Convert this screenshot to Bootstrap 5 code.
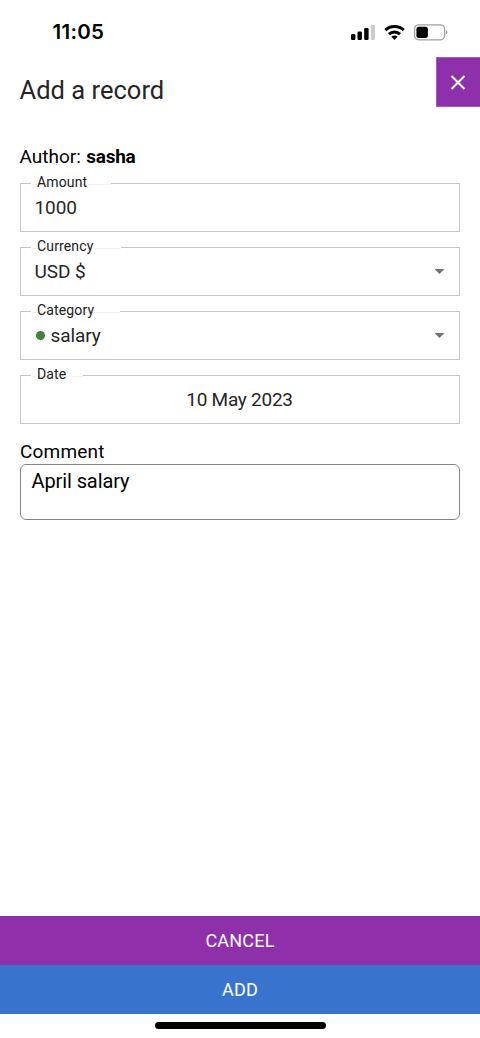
<!DOCTYPE html>
<html lang="en">
<head>
<meta charset="utf-8">
<meta name="viewport" content="width=device-width, initial-scale=1">
<title>Add a record</title>
<link href="https://cdn.jsdelivr.net/npm/bootstrap@5.3.0/dist/css/bootstrap.min.css" rel="stylesheet">
<style>
body{font-family:Roboto,"Liberation Sans",sans-serif;font-size:19px;line-height:24px;color:#000;background:#fff}
.screen{height:1038px}
.status{height:57px;padding:6px 32px 0 52.5px}
.clock{font-family:Inter,sans-serif;font-weight:600;font-size:20.5px;letter-spacing:.3px}
.head{height:50px;padding-left:19.5px}
.title{font-size:25.5px;line-height:30px;color:#262626;padding-top:18px;letter-spacing:.02px}
.close-btn{width:44.5px;height:50px;background:#8e30aa;border:1px solid #a45bbb;border-right:0;border-radius:0}
.record-form{padding:0 20px}
.author{margin:38px 0 14px -.5px;letter-spacing:0}
.author b{margin-left:.8px;letter-spacing:-.3px}
.field{height:49px;border:1px solid #c6c6c6;padding:0 14.5px 0 13.5px;margin-bottom:15px;color:#262626}
.field-label{top:-10px;left:10px;font-size:14px;line-height:16px;padding-left:6px;color:#212121;background:#fff;height:11px;border-bottom:1px solid #f2f2f2;letter-spacing:.15px}
.value{letter-spacing:-.08px}
.date-value{letter-spacing:-.25px}
.caret{width:10px;height:5px;background:#737373;clip-path:polygon(0 0,100% 0,50% 100%)}
.dot{width:9px;height:9px;background:#45803b;margin:0 6px 0 1px}
.comment-label{margin-top:16px;letter-spacing:.2px}
.comment-box{height:56px;border:1px solid #858585;border-radius:6px;padding:4px 10.5px;font-size:20px;letter-spacing:-.1px}
.wide-btn{height:49px;border:0;border-radius:0;color:#fff;font-size:18px;letter-spacing:.2px}
.cancel{background:#8e30aa}
.add{background:#3874cd}
.home{height:24px;padding-top:8px}
.home-bar{width:171px;height:6.5px;border-radius:4px;background:#000}
</style>
</head>
<body>
<main class="screen d-flex flex-column">
<div class="status d-flex align-items-center justify-content-between">
<span class="clock">11:05</span>
<svg width="98" height="20" viewBox="350 21 98 20">
<g><rect x="351" y="33" width="4.4" height="6" rx="1.2"/><rect x="357.5" y="30.5" width="4.4" height="8.5" rx="1.2"/><rect x="364.2" y="27" width="4.4" height="12" rx="1.2"/><rect x="370.8" y="24" width="4.2" height="15" rx="1.2" fill="#cbcbcb"/></g>
<g fill="none" stroke="#000" stroke-width="3"><path d="M385.3 29.2a13.3 13.3 0 0 1 18.4 0"/><path d="M389 33.2a8 8 0 0 1 11 0"/></g><path d="M391.4 35.8a4.6 4.6 0 0 1 6.2 0l-3.1 3.1z"/>
<rect x="414.6" y="23.8" width="30" height="15" rx="4.3" fill="none" stroke="#a0a0a0" stroke-width="1.3"/><rect x="416.4" y="25.7" width="11.5" height="11.2" rx="2.5"/><path d="M446 28.8q1.3.8 1.3 2.4t-1.3 2.4z" fill="#999"/>
</svg>
</div>
<header class="head d-flex justify-content-between">
<h1 class="title fw-normal m-0">Add a record</h1>
<button class="btn close-btn p-0 d-flex align-items-center justify-content-center" aria-label="Close"><svg width="16" height="16" viewBox="0 0 16 16"><path d="M1.5 2l13 13m0-13l-13 13" stroke="#fff" stroke-width="2"/></svg></button>
</header>
<form class="record-form flex-grow-1">
<div class="author">Author: <b>sasha</b></div>
<div class="field position-relative d-flex align-items-center"><span class="field-label position-absolute" style="width:80px">Amount</span><span class="value">1000</span></div>
<div class="field position-relative d-flex align-items-center justify-content-between"><span class="field-label position-absolute" style="width:90px">Currency</span><span class="value">USD $</span><i class="caret"></i></div>
<div class="field position-relative d-flex align-items-center"><span class="field-label position-absolute" style="width:89px">Category</span><i class="dot rounded-circle"></i><span class="value">salary</span><i class="caret ms-auto"></i></div>
<div class="field position-relative d-flex align-items-center justify-content-center"><span class="field-label position-absolute" style="width:52px">Date</span><span class="date-value">10 May 2023</span></div>
<div class="comment-label">Comment</div>
<div class="comment-box">April salary</div>
</form>
<button class="btn wide-btn cancel w-100">CANCEL</button>
<button class="btn wide-btn add w-100">ADD</button>
<div class="home d-flex justify-content-center"><div class="home-bar"></div></div>
</main>
<script src="https://cdn.jsdelivr.net/npm/bootstrap@5.3.0/dist/js/bootstrap.bundle.min.js"></script>
</body>
</html>
